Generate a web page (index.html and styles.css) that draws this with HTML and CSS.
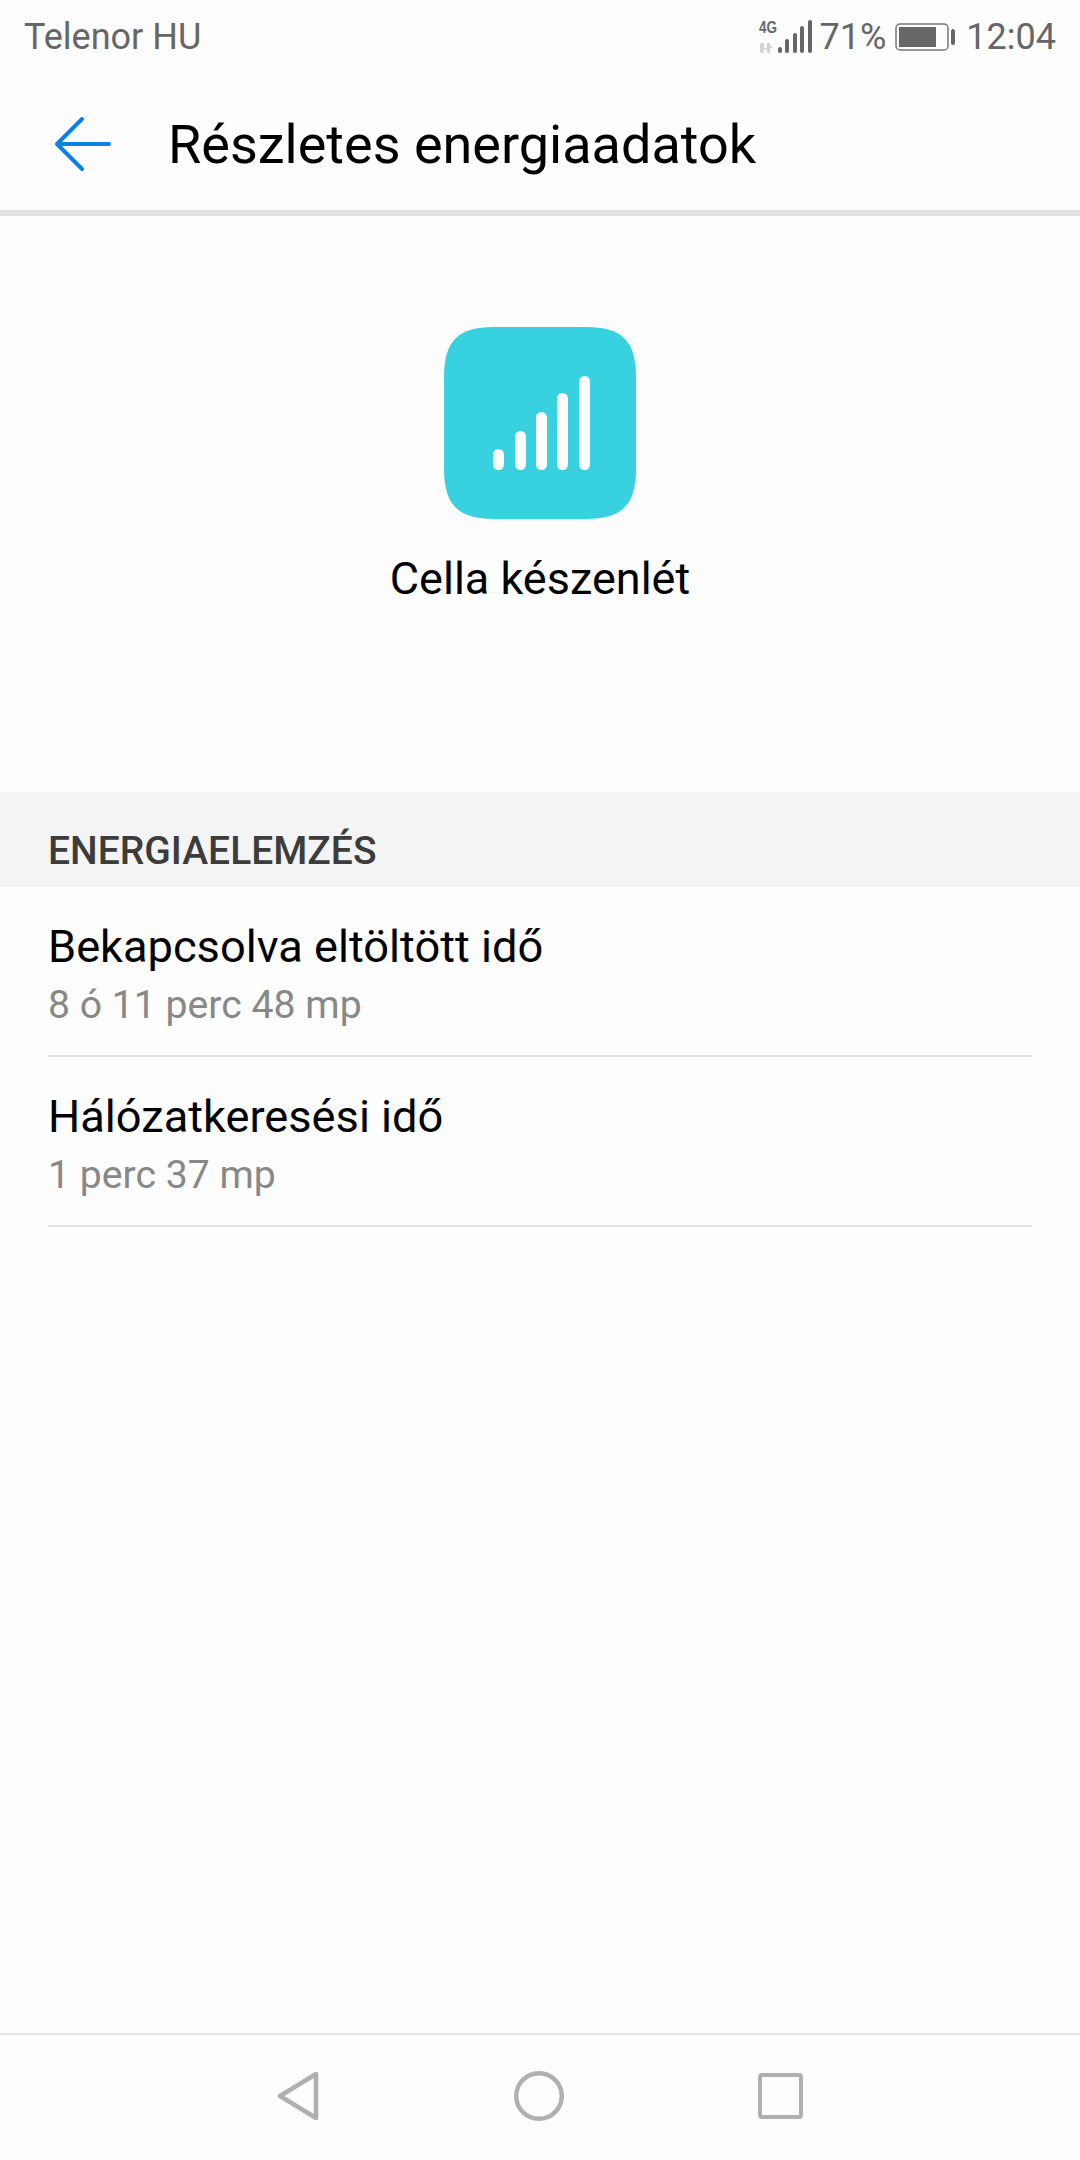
FILE: index.html
```html
<!DOCTYPE html>
<html>
<head>
<meta charset="utf-8">
<title>Részletes energiaadatok</title>
<link rel="stylesheet" href="styles.css">
</head>
<body>
<div class="screen">
    <div class="statusbar">
        <span class="carrier">Telenor HU</span>
        <div class="status-right">
            <svg class="signal" width="56" height="36" viewBox="0 0 56 36">
                <text class="net" x="1" y="14" textLength="18" lengthAdjust="spacingAndGlyphs">4G</text>
                <g fill="#d4d4d4">
                    <rect x="2" y="24" width="4" height="10" rx="1"/>
                    <rect x="9" y="24" width="3" height="10" rx="1"/>
                    <path d="M3 29 h12 l-3 -3 v6 z"/>
                </g>
                <g fill="#666">
                    <rect x="20" y="28" width="4" height="6" rx="2"/>
                    <rect x="27" y="20" width="4" height="14" rx="2"/>
                    <rect x="35" y="14" width="4" height="20" rx="2"/>
                    <rect x="42" y="7" width="4" height="27" rx="2"/>
                    <rect x="50" y="1" width="4" height="33" rx="2"/>
                </g>
            </svg>
            <span class="pct">71%</span>
            <svg class="battery" width="60" height="28" viewBox="0 0 60 28">
                <rect x="1" y="1" width="52" height="26" rx="4" fill="none" stroke="#777" stroke-width="1.5"/>
                <rect x="4" y="4" width="37" height="20" fill="#666"/>
                <rect x="56" y="6" width="4" height="16" rx="2" fill="#666"/>
            </svg>
            <span class="clock">12:04</span>
        </div>
    </div>
    <div class="toolbar">
        <svg class="back" width="58" height="58" viewBox="0 0 58 58">
            <path d="M28 3 L3 28 L28 53 M3 28 H55" fill="none" stroke="#0a7fe6" stroke-width="4" stroke-linecap="round" stroke-linejoin="round"/>
        </svg>
        <h1 class="title">Részletes energiaadatok</h1>
    </div>
    <div class="hero">
        <svg class="app-icon" width="192" height="192" viewBox="0 0 192 192">
            <path d="M50 0 H142 C178 0 192 14 192 50 V142 C192 178 178 192 142 192 H50 C14 192 0 178 0 142 V50 C0 14 14 0 50 0 Z" fill="#38d1df"/>
            <g fill="#fff">
                <rect x="49" y="122" width="11" height="21" rx="5.5"/>
                <rect x="71" y="104" width="11" height="39" rx="5.5"/>
                <rect x="92" y="85" width="11" height="58" rx="5.5"/>
                <rect x="113" y="66" width="11" height="77" rx="5.5"/>
                <rect x="135" y="49" width="11" height="94" rx="5.5"/>
            </g>
        </svg>
        <div class="app-name">Cella készenlét</div>
    </div>
    <div class="section">ENERGIAELEMZÉS</div>
    <div class="rows">
        <div class="row">
            <div class="row-title">Bekapcsolva eltöltött idő</div>
            <div class="row-sub">8 ó 11 perc 48 mp</div>
        </div>
        <div class="row">
            <div class="row-title">Hálózatkeresési idő</div>
            <div class="row-sub">1 perc 37 mp</div>
        </div>
    </div>
    <div class="navbar">
        <svg width="42" height="50" viewBox="0 0 42 50">
            <path d="M39 3 V47 L3 25 Z" fill="none" stroke="#b0b0b0" stroke-width="4.5" stroke-linejoin="round"/>
        </svg>
        <svg width="50" height="50" viewBox="0 0 50 50">
            <circle cx="25" cy="25" r="22.8" fill="none" stroke="#b0b0b0" stroke-width="4.4"/>
        </svg>
        <svg width="45" height="46" viewBox="0 0 45 46">
            <rect x="2" y="2" width="41" height="42" rx="2" fill="none" stroke="#b0b0b0" stroke-width="4"/>
        </svg>
    </div>
</div>
</body>
</html>
```

FILE: styles.css
```css
html, body {
    margin: 0;
    padding: 0;
}

body {
    background: #fdfdfd;
    font-family: Roboto, "Noto Sans", sans-serif;
}

.screen {
    width: 1080px;
    height: 2160px;
    display: flex;
    flex-direction: column;
    overflow: hidden;
}

.statusbar {
    height: 74px;
    box-sizing: border-box;
    padding: 0 24px;
    display: flex;
    align-items: center;
    justify-content: space-between;
    color: #666;
    font-size: 36px;
}

.status-right {
    display: flex;
    align-items: center;
}

.signal {
    overflow: visible;
}

.net {
    font-family: "Liberation Sans", sans-serif;
    font-size: 16px;
    font-weight: bold;
    fill: #666;
}

.pct {
    margin-left: 6px;
}

.battery {
    margin-left: 9px;
}

.clock {
    margin-left: 11px;
}

.toolbar {
    height: 136px;
    display: flex;
    align-items: center;
    padding-left: 54px;
    border-bottom: 6px solid #e2e2e2;
}

.back {
    margin-top: 5px;
}

.title {
    margin: 5px 0 0 56px;
    font-size: 54px;
    font-weight: normal;
    color: #000;
}

.hero {
    height: 576px;
    box-sizing: border-box;
    padding-top: 111px;
    display: flex;
    flex-direction: column;
    align-items: center;
}

.app-name {
    margin-top: 33px;
    font-size: 45px;
    color: #000;
}

.section {
    height: 95px;
    box-sizing: border-box;
    padding: 37px 48px 0;
    background: #f4f4f4;
    color: #3c3c3c;
    font-size: 39px;
    font-weight: 500;
    line-height: 45px;
}

.rows {
    flex: 1;
    padding: 0 48px;
}

.row {
    height: 170px;
    box-sizing: border-box;
    padding-top: 34px;
    border-bottom: 2px solid #e2e2e2;
}

.row-title {
    font-size: 45.2px;
    line-height: 52px;
    color: #000;
}

.row-sub {
    margin-top: 10px;
    font-size: 39.2px;
    line-height: 44px;
    color: #888;
}

.navbar {
    height: 127px;
    box-sizing: border-box;
    border-top: 2px solid #e4e4e4;
    padding: 0 277px 4px 277px;
    display: flex;
    align-items: center;
    justify-content: space-between;
}
```
